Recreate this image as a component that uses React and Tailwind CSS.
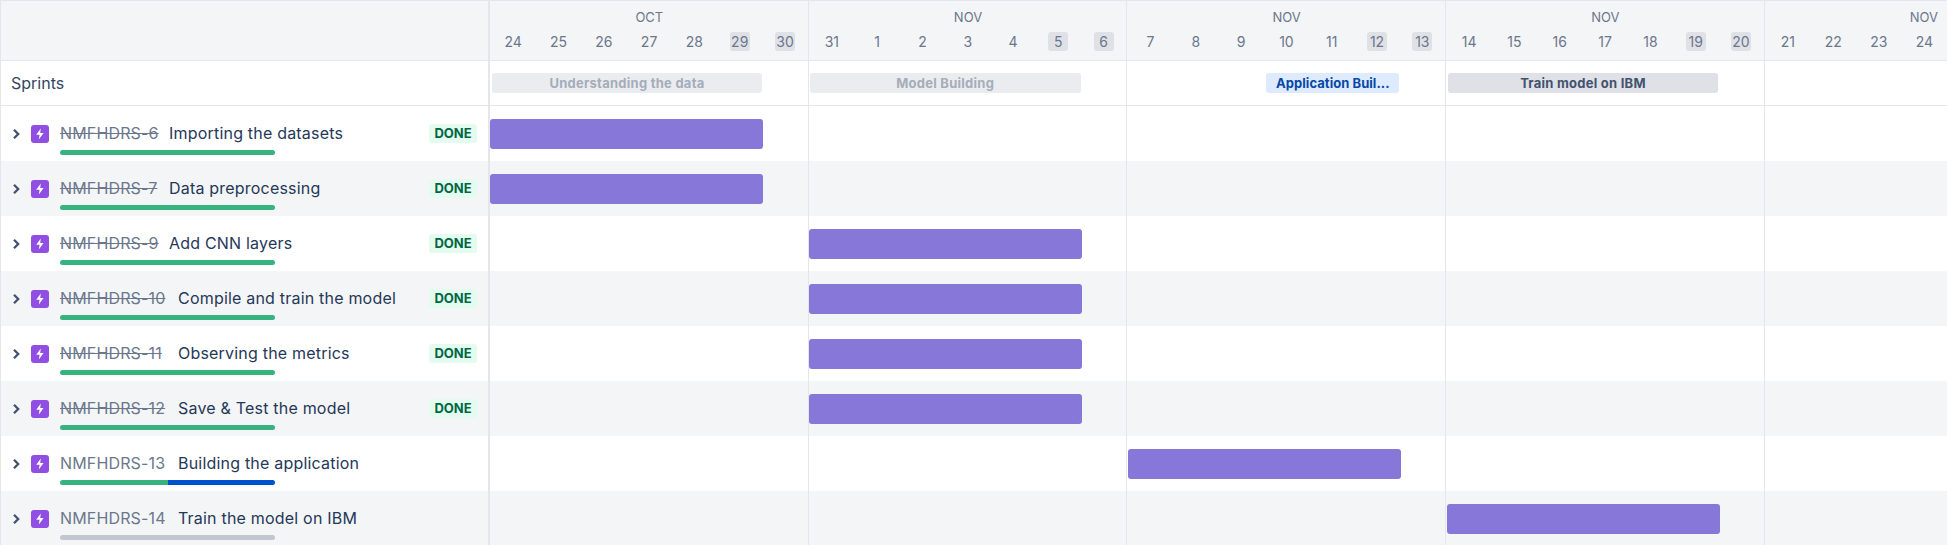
const months = [
  { name: 'OCT', days: [24, 25, 26, 27, 28, 29, 30] },
  { name: 'NOV', days: [31, 1, 2, 3, 4, 5, 6] },
  { name: 'NOV', days: [7, 8, 9, 10, 11, 12, 13] },
  { name: 'NOV', days: [14, 15, 16, 17, 18, 19, 20] },
  { name: 'NOV', days: [21, 22, 23, 24] },
];

const rows = [
  { id: 'NMFHDRS-6', title: 'Importing the datasets', done: true, month: 0 },
  { id: 'NMFHDRS-7', title: 'Data preprocessing', done: true, month: 0 },
  { id: 'NMFHDRS-9', title: 'Add CNN layers', done: true, month: 1 },
  { id: 'NMFHDRS-10', title: 'Compile and train the model', done: true, month: 1 },
  { id: 'NMFHDRS-11', title: 'Observing the metrics', done: true, month: 1 },
  { id: 'NMFHDRS-12', title: 'Save & Test the model', done: true, month: 1 },
  { id: 'NMFHDRS-13', title: 'Building the application', month: 2, progress: 'half' },
  { id: 'NMFHDRS-14', title: 'Train the model on IBM', month: 3, progress: 'none' },
];

const Chevron = () => (
  <svg width="10" height="12" viewBox="0 0 10 12" fill="none" className="shrink-0 text-[#42526e]">
    <path d="M3 1.8L7.2 6L3 10.2" stroke="currentColor" strokeWidth="2.3" />
  </svg>
);

const EpicIcon = () => (
  <div className="w-[18px] h-[18px] shrink-0 rounded-[3px] bg-[#904ee2] flex items-center justify-center ml-[10px]">
    <svg width="10" height="12" viewBox="0 0 10 12" fill="white">
      <path d="M5.8 0.5L1.2 6.8H4.6L3.8 11.5L8.6 4.9H5.2L5.8 0.5Z" />
    </svg>
  </div>
);

const Progress = ({ type }) => (
  <div className="flex w-[215px] h-[5px] mt-[4px] rounded-full overflow-hidden">
    {type === 'half' ? (
      <>
        <div className="w-1/2 bg-[#36b37e]" />
        <div className="w-1/2 bg-[#0052cc]" />
      </>
    ) : type === 'none' ? (
      <div className="w-full bg-[#c1c7d0]" />
    ) : (
      <div className="w-full bg-[#36b37e]" />
    )}
  </div>
);

const Row = ({ row, shaded }) => (
  <div className={`flex h-[55px] ${shaded ? 'bg-[#f4f5f7]' : 'bg-white'}`}>
    <div className="w-[490px] shrink-0 flex items-start border-l border-r-2 border-[#e4e6ea] pl-[10px] pr-[11px] pt-[14px]">
      <div className="flex items-center h-[28px]">
        <Chevron />
        <EpicIcon />
      </div>
      <div className="ml-[11px]">
        <div className="flex items-center h-[26px] text-[16px] leading-[26px] whitespace-nowrap">
          <span
            className={`text-[#6b778c] tracking-[0.15px] ${row.id.length > 9 ? 'w-[108px]' : 'w-[99px]'} ${row.done ? 'line-through' : ''}`}
          >
            {row.id}
          </span>
          <span className="ml-[10px] text-[#253858] tracking-[0.2px]">{row.title}</span>
        </div>
        <Progress type={row.progress} />
      </div>
      {row.done && (
        <span className="ml-auto mt-[4px] h-[19px] w-[48px] rounded-[3px] bg-[#e3fcef] text-[#006644] text-[13px] leading-[19px] font-bold text-center">
          DONE
        </span>
      )}
    </div>
    <div className="flex">
      {months.map((m, i) => (
        <div key={i} className="w-[318.67px] shrink-0 border-r border-[#e4e6ea] pt-[13px]">
          {row.month === i && (
            <div className={`w-[273px] h-[30px] rounded-[3px] bg-[#8777d9] ${i > 1 ? 'ml-[1px]' : ''}`} />
          )}
        </div>
      ))}
    </div>
  </div>
);

const Chip = ({ className, children }) => (
  <div className={`h-[20px] rounded-[3px] text-[13px] leading-[20px] font-bold text-center ${className}`}>
    {children}
  </div>
);

export default function App() {
  return (
    <div className="w-[1947px] h-[545px] overflow-hidden bg-white font-['Inter',sans-serif]">
      {/* Header */}
      <div className="flex h-[61px] bg-[#f4f5f7] border-t border-b border-[#e4e6ea]">
        <div className="w-[490px] shrink-0 border-l border-r-2 border-[#e4e6ea]" />
        <div className="flex">
          {months.map((m, i) => (
            <div key={i} className="w-[318.67px] shrink-0 border-r border-[#e4e6ea]">
              <div className="h-[31px] pt-[6px] pl-[1px] text-center text-[13px] leading-[20px] text-[#6b778c]">{m.name}</div>
              <div className="flex pl-[0.5px]">
                {m.days.map((d, j) => (
                  <div key={d} className="w-[45.5px] flex justify-center">
                    <span className={`w-[20px] h-[19px] rounded-[3px] text-center text-[14px] leading-[19px] text-[#6b778c] ${j > 4 ? 'bg-[#dfe1e6]' : ''}`}>
                      {d}
                    </span>
                  </div>
                ))}
              </div>
            </div>
          ))}
        </div>
      </div>

      {/* Sprints */}
      <div className="flex h-[45px] border-b border-[#e4e6ea]">
        <div className="w-[490px] shrink-0 border-l border-r-2 border-[#e4e6ea] pl-[10px] text-[16px] leading-[44px] text-[#344563]">
          Sprints
        </div>
        <div className="flex">
          <div className="w-[318.67px] shrink-0 border-r border-[#e4e6ea] pt-[12px] pl-[2px]">
            <Chip className="w-[270px] bg-[#ebecf0] text-[#a5adba] tracking-[0.25px]">Understanding the data</Chip>
          </div>
          <div className="w-[318.67px] shrink-0 border-r border-[#e4e6ea] pt-[12px] pl-[1px]">
            <Chip className="w-[271px] bg-[#ebecf0] text-[#a5adba] tracking-[0.25px]">Model Building</Chip>
          </div>
          <div className="w-[318.67px] shrink-0 border-r border-[#e4e6ea] pt-[12px] pl-[139px]">
            <Chip className="w-[133px] bg-[#deebff] text-[#0747a6] tracking-[0.05px]">Application Buil...</Chip>
          </div>
          <div className="w-[318.67px] shrink-0 border-r border-[#e4e6ea] pt-[12px] pl-[2px]">
            <Chip className="w-[270px] bg-[#dfe1e6] text-[#42526e] tracking-[0.25px]">Train model on IBM</Chip>
          </div>
          <div className="w-[318.67px] shrink-0 border-r border-[#e4e6ea]" />
        </div>
      </div>

      {rows.map((r, i) => (
        <Row key={r.id} row={r} shaded={i % 2 === 1} />
      ))}
    </div>
  );
}
